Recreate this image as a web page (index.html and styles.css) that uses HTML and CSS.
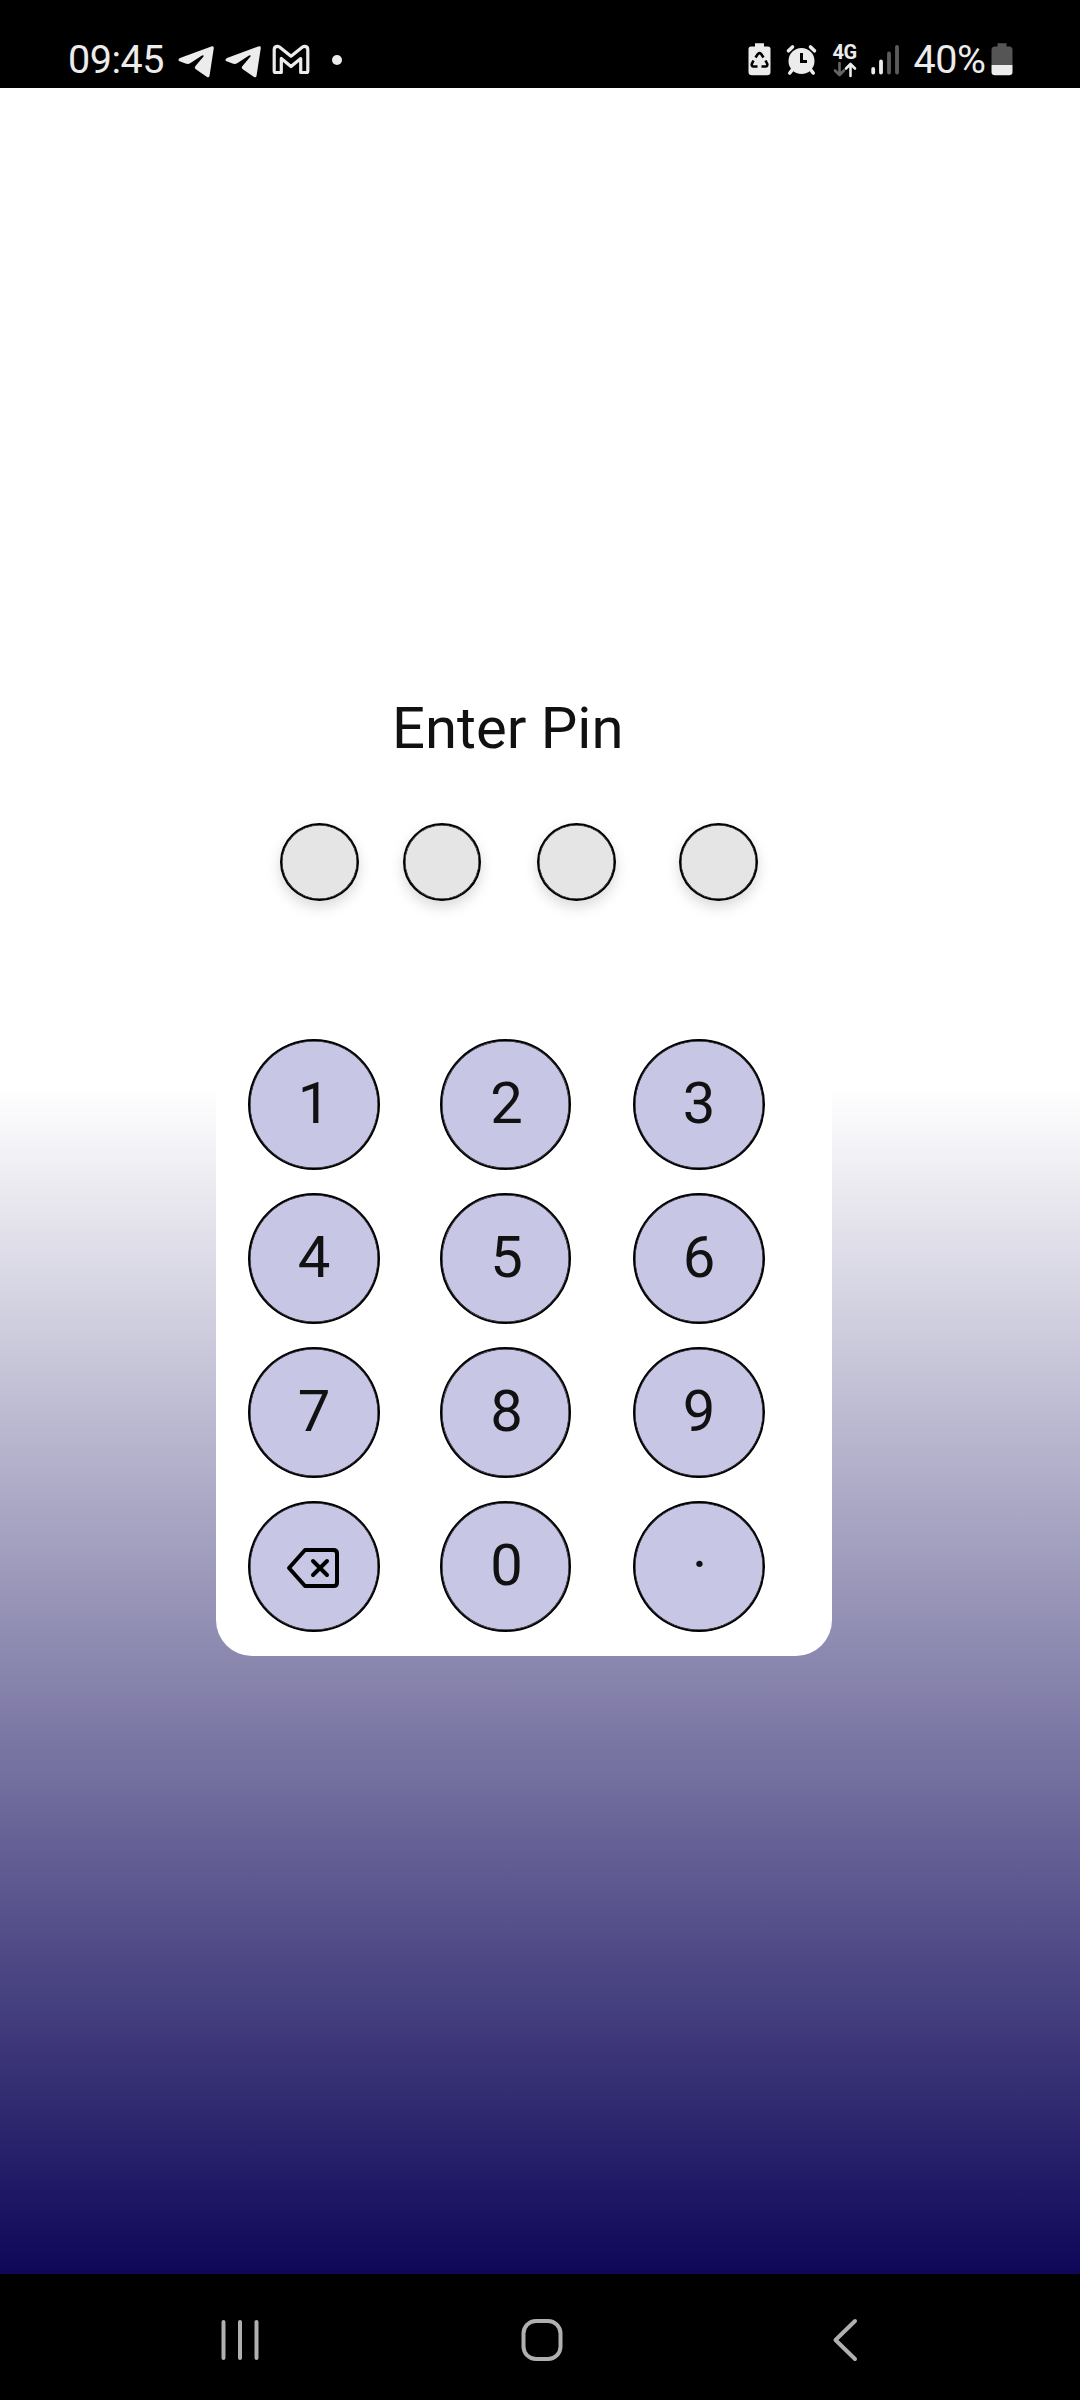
FILE: index.html
```html
<!DOCTYPE html>
<html lang="en">
<head>
<meta charset="utf-8">
<title>Enter Pin</title>
<link rel="stylesheet" href="styles.css">
</head>
<body>
<header class="status">
  <div class="status-left">
    <span class="clock">09:45</span>
    <svg class="telegram" width="36" height="36" viewBox="0 0 36 36"><path d="M1 19Q-.5 17.500 2 16L34 4.200Q36 4 35.800 6L31.500 34Q31 36 29 35L17.500 27Q16 25.500 17.500 24L25.500 14.500Q26 12.500 24 13.500L12.500 21Q10 22.500 7.500 21.500Z"/></svg>
    <svg class="telegram second" width="36" height="36" viewBox="0 0 36 36"><path d="M1 19Q-.5 17.500 2 16L34 4.200Q36 4 35.800 6L31.500 34Q31 36 29 35L17.500 27Q16 25.500 17.500 24L25.500 14.500Q26 12.500 24 13.500L12.500 21Q10 22.500 7.500 21.500Z"/></svg>
    <svg class="gmail" width="38" height="36" viewBox="0 0 38 36"><path d="M3.500 30.500Q2.200 30.500 2.200 29V7.500Q2.200 4.300 5.500 4.300Q6.500 4.300 7.500 5L19 14.200L30.500 5Q31.500 4.300 32.500 4.300Q35.800 4.300 35.800 7.500V29Q35.800 30.500 34.500 30.500H28.700V16.500L19 24.500L9.300 16.500V30.500Z"/></svg>
    <span class="more-dot"></span>
  </div>
  <div class="status-right">
    <svg width="23" height="36" viewBox="0 0 23 36">
      <path d="M7 1.300H16V4.500H20Q22.500 4.500 22.500 7V30Q22.500 33.300 19 33.300H4Q.5 33.300.5 30V7Q.5 4.500 3 4.500H7Z"/>
      <g class="recycle"><path d="M7.500 15.500L10 11.800Q11.500 10.300 13 11.800L15.500 15.500M17.500 18.500L19.300 22Q19.500 24.500 17.500 24.500H13.500M9.500 24.500H5.500Q3.300 24.500 3.800 22L5.500 18.500"/></g>
    </svg>
    <svg class="alarm" width="31" height="36" viewBox="0 0 31 36">
      <circle cx="15.500" cy="19" r="13"/>
      <path class="bells" d="M2.500 8.800L6.500 5M28.500 8.800L24.500 5M6.500 27.500L3.800 31M24.500 27.500L27.200 31"/>
      <path class="hands" d="M15.500 11V19.500H21"/>
    </svg>
    <div class="network">
      <span>4G</span>
      <svg width="24" height="15" viewBox="0 0 24 15"><path class="down" d="M6.500 1V13M2 8.500L6.500 13L11 8.500"/><path class="up" d="M17.500 14V2M13 6.500L17.500 2L22 6.500"/></svg>
    </div>
    <svg class="signal" width="30" height="36" viewBox="0 0 30 36"><path class="on" d="M2.200 27V30.500M10 19.500V30.500"/><path class="off" d="M18 11.500V30.500M26 5V30.500"/></svg>
    <span class="percent">40%</span>
    <svg width="22" height="36" viewBox="0 0 22 36"><path class="empty" d="M6.500 1.300H15.500V4.500H19Q21.500 5 21.500 8V23H.5V8Q.5 5 3 4.500H6.500Z"/><path d="M.5 23H21.500V30Q21.500 33.300 18 33.300H4Q.5 33.300.5 30Z"/></svg>
  </div>
</header>

<main class="screen">
  <h1 class="title">Enter Pin</h1>
  <div class="pins"><i class="pin"></i><i class="pin"></i><i class="pin"></i><i class="pin"></i></div>
  <div class="pad">
    <button class="key">1</button><button class="key">2</button><button class="key">3</button>
    <button class="key">4</button><button class="key">5</button><button class="key">6</button>
    <button class="key">7</button><button class="key">8</button><button class="key">9</button>
    <button class="key erase" aria-label="Delete"><svg width="52" height="40" viewBox="0 0 52 40"><path d="M18 2H46.500Q50 2 50 5.500V34.500Q50 38 46.500 38H18L2 20Z"/><path d="M26 13L40 27M40 13L26 27"/></svg></button><button class="key">0</button><button class="key point">·</button>
  </div>
</main>

<nav class="navbar">
  <svg width="40" height="44" viewBox="0 0 40 44"><path d="M3.500 4V40M20 4V40M36.500 4V40"/></svg>
  <svg class="home" width="44" height="44" viewBox="0 0 44 44"><rect x="3.500" y="3" width="37" height="38" rx="12.500"/></svg>
  <svg width="26" height="44" viewBox="0 0 26 44"><path d="M23 3L3.500 22L23 41"/></svg>
</nav>
</body>
</html>
```
FILE: styles.css
```css
* { box-sizing: border-box; }

body {
  margin: 0;
  width: 1080px;
  height: 2400px;
  display: flex;
  flex-direction: column;
  font-family: Roboto, "Noto Sans", sans-serif;
  background: #000;
  overflow: hidden;
}

svg { display: block; flex: none; overflow: visible; }

.status {
  height: 88px;
  padding: 42px 67.500px 0 68px;
  display: flex;
  justify-content: space-between;
  background: #000;
  color: #ececec;
}
.status svg { fill: #ececec; }
.status-left, .status-right { display: flex; height: 36px; }
.clock, .percent { font-size: 39.5px; line-height: 36px; white-space: nowrap; letter-spacing: -.5px; }
.clock { width: 110px; }
.telegram.second { margin-left: 11px; }
.status .gmail { margin-left: 10.500px; fill: none; stroke: #ececec; stroke-width: 3.200; stroke-linejoin: round; }
.more-dot { width: 10px; height: 10px; margin: 13px 0 0 22.500px; border-radius: 50%; background: #ececec; }

.status .recycle path { fill: none; stroke: #000; stroke-width: 2.600; }
.alarm { margin-left: 15px; }
.status .bells { fill: none; stroke: #ececec; stroke-width: 3.600; stroke-linecap: round; }
.status .hands { fill: none; stroke: #000; stroke-width: 3; }
.network { width: 26px; margin-left: 16px; font-size: 20px; font-weight: 700; line-height: 20px; letter-spacing: -.5px; }
.network svg { fill: none; stroke-width: 2.600; stroke-linecap: round; stroke-linejoin: round; }
.status .network path { fill: none; }
.up { stroke: #ececec; }
.down { stroke: #666; }
.signal { margin-left: 12px; stroke-width: 3.800; stroke-linecap: round; }
.on { stroke: #ececec; }
.off { stroke: #5c5c5c; }
.percent { width: 77px; margin-left: 13px; }
.status .empty { fill: #555; }

.screen {
  height: 2186px;
  padding-top: 606px;
  display: flex;
  flex-direction: column;
  background: linear-gradient(#fff 1000px, #0e0759 2186px);
}

.title {
  margin: 0 0 0 392px;
  height: 68px;
  font-size: 58px;
  font-weight: 400;
  line-height: 68px;
  color: #111;
}

.pins { display: flex; margin: 61px 0 0 280px; }
.pin {
  width: 79px;
  height: 78px;
  border: 2px solid #000;
  border-radius: 50%;
  background: #e5e5e5;
  box-shadow: 0 6px 14px rgba(0, 0, 0, .15), inset 0 0 0 .5px #000;
}
.pin:nth-child(2) { width: 78px; margin-left: 44px; }
.pin:nth-child(3) { margin-left: 56px; }
.pin:nth-child(4) { margin-left: 63px; }

.pad {
  margin: 119px 0 0 216px;
  width: 616px;
  padding: 19px 32px 24px;
  display: grid;
  grid-template-columns: 192px 193px 132px;
  grid-auto-rows: 131px;
  row-gap: 23px;
  border-radius: 36px;
  background: #fff;
}
.key {
  width: 132px;
  padding: 0 0 4px;
  display: flex;
  align-items: center;
  justify-content: center;
  border: 2px solid #000;
  border-radius: 50%;
  background: #c8c6e5;
  box-shadow: inset 0 0 0 .5px #000;
  color: #111;
  font: 400 58px/68px Roboto, "Noto Sans", sans-serif;
}
.key:nth-child(3n+2) { width: 131px; padding-left: 2px; }
.erase { padding: 3px 2px 0 0; }
.point { padding: 0 0 6px 1px; }
.erase svg { fill: none; stroke: #000; stroke-width: 4; stroke-linecap: round; stroke-linejoin: round; }

.navbar {
  height: 126px;
  padding: 44px 222px 0 220px;
  display: flex;
  justify-content: space-between;
  background: #000;
}
.navbar svg { fill: none; stroke: #b0b0b0; stroke-width: 4; stroke-linecap: round; stroke-linejoin: round; }
.navbar .home { margin-right: 8px; }
```
